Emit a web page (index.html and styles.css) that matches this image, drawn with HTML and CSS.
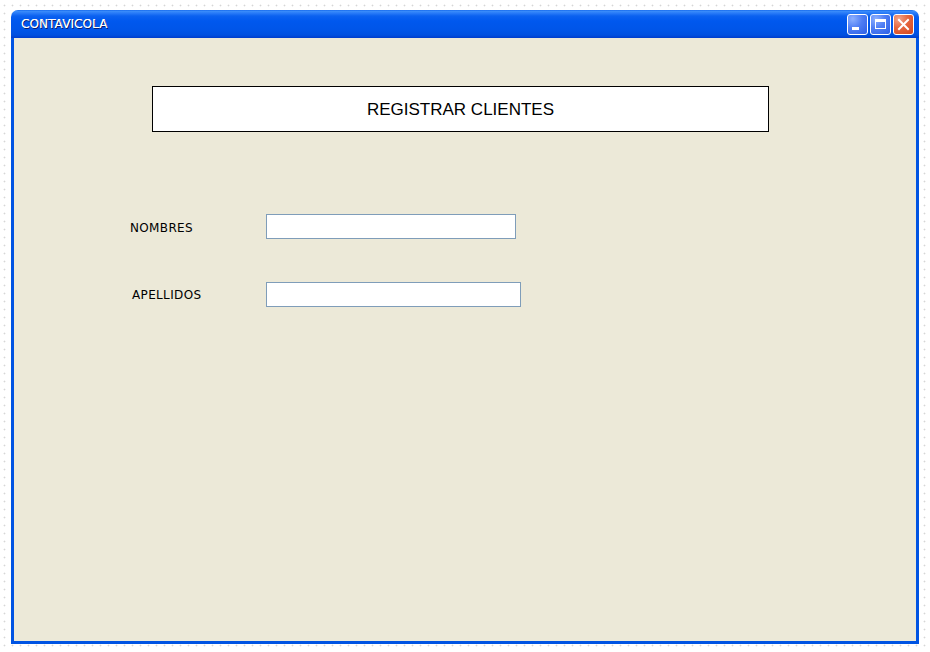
FILE: index.html
```html
<!DOCTYPE html>
<html lang="es">
<head>
<meta charset="utf-8">
<title>CONTAVICOLA</title>
<link rel="stylesheet" href="styles.css">
</head>
<body>
<div class="window">
  <div class="titlebar">
    <span class="title">CONTAVICOLA</span>
    <div class="controls">
      <div class="btn btn-min"><svg width="19" height="19" viewBox="0 0 19 19"><rect x="4" y="12" width="7" height="3" fill="#fff"/></svg></div>
      <div class="btn btn-max"><svg width="19" height="19" viewBox="0 0 19 19"><rect x="4.5" y="4.5" width="10" height="9" fill="none" stroke="#fff" stroke-width="1"/><rect x="4" y="4" width="11" height="3" fill="#fff"/></svg></div>
      <div class="btn btn-close"><svg width="19" height="19" viewBox="0 0 19 19"><path d="M5 5 L14 14 M14 5 L5 14" stroke="#fff" stroke-width="2" stroke-linecap="square"/></svg></div>
    </div>
  </div>
  <div class="content">
    <div class="header-box">REGISTRAR CLIENTES</div>
    <div class="form">
      <div class="row">
        <label class="label">NOMBRES</label>
        <input class="field" type="text">
      </div>
      <div class="row row-second">
        <label class="label label-shift">APELLIDOS</label>
        <input class="field field-wide" type="text">
      </div>
    </div>
  </div>
</div>
</body>
</html>
```
FILE: styles.css
```css
html, body {
  margin: 0;
  padding: 0;
}
body {
  width: 930px;
  height: 652px;
  overflow: hidden;
  background-color: #fff;
  background-image: radial-gradient(circle at 4.5px 5.5px, #d6d6d6 0.8px, transparent 1.1px);
  background-size: 8px 8px;
  font-family: "DejaVu Sans", Tahoma, sans-serif;
}
.window {
  margin: 10px 0 0 11px;
  width: 908px;
  height: 634px;
  display: flex;
  flex-direction: column;
  box-sizing: border-box;
}
.titlebar {
  height: 28px;
  flex: 0 0 28px;
  border-radius: 7px 7px 0 0;
  background: linear-gradient(to bottom, #0a5ee8 0px, #3d8ffb 1px, #2a7cf8 3px, #0b61f0 6px, #0058ee 11px, #0055e8 20px, #0050e0 25px, #003dcc 28px);
  display: flex;
  align-items: center;
  justify-content: space-between;
  padding: 0 5px 0 10px;
  box-sizing: border-box;
}
.title {
  color: #fff;
  font-family: "DejaVu Sans", Tahoma, sans-serif;
  font-size: 12px;
  font-weight: normal;
  letter-spacing: 0.1px;
  text-shadow: 1px 1px 0 #0a1e70, 0.4px 0 0 #fff;
  padding-top: 0;
}
.controls {
  display: flex;
  gap: 2px;
  padding-top: 1px;
}
.btn {
  width: 21px;
  height: 21px;
  box-sizing: border-box;
  border: 1px solid #fff;
  border-radius: 3px;
  display: flex;
  align-items: center;
  justify-content: center;
}
.btn svg { display: block; }
.btn-min, .btn-max {
  background: radial-gradient(circle at 25% 20%, #8cb0ff 0%, #4f7ef4 45%, #2c5fe6 100%);
}
.btn-close {
  background: radial-gradient(circle at 25% 20%, #f2a48a 0%, #e5663e 45%, #d5461c 100%);
}
.content {
  flex: 1;
  background: #ece9d8;
  border: 3px solid #0054e3;
  border-top: 0;
  padding: 48px 0 0 138px;
}
.header-box {
  width: 617px;
  height: 46px;
  box-sizing: border-box;
  border: 1px solid #000;
  background: #fff;
  display: flex;
  align-items: center;
  justify-content: center;
  font-family: "Liberation Sans", Arial, sans-serif;
  font-size: 17px;
  color: #000;
  padding-top: 1px;
}
.form {
  margin: 82px 0 0 -22px;
  display: flex;
  flex-direction: column;
  gap: 43px;
}
.row {
  display: flex;
  align-items: center;
}
.label {
  width: 136px;
  font-family: "DejaVu Sans", Tahoma, sans-serif;
  font-size: 12px;
  letter-spacing: 0.35px;
  color: #000;
  padding-top: 2px;
}
.label-shift {
  padding-left: 2px;
  width: 134px;
  padding-top: 0;
}
.field {
  width: 250px;
  height: 25px;
  box-sizing: border-box;
  border: 1px solid #7f9db9;
  background: #fff;
  margin: 0;
  padding: 0 3px;
  outline: none;
}
.field-wide {
  width: 255px;
}
```
